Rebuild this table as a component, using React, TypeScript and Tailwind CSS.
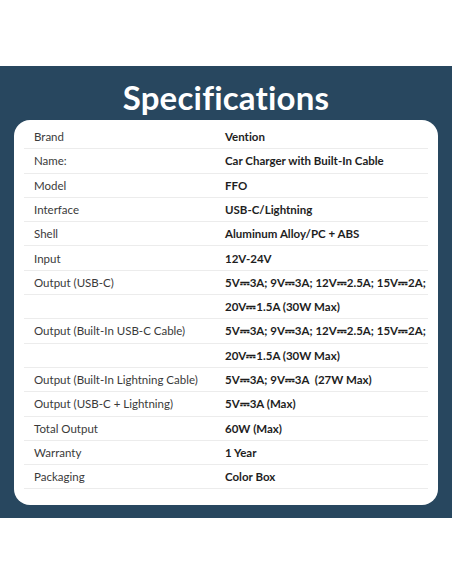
import React from "react";

const rows: [string, string][] = [
  ["Brand", "Vention"],
  ["Name:", "Car Charger with Built-In Cable"],
  ["Model", "FFO"],
  ["Interface", "USB-C/Lightning"],
  ["Shell", "Aluminum Alloy/PC + ABS"],
  ["Input", "12V-24V"],
  ["Output (USB-C)", "5V⎓3A; 9V⎓3A; 12V⎓2.5A; 15V⎓2A;"],
  ["", "20V⎓1.5A (30W Max)"],
  ["Output (Built-In USB-C Cable)", "5V⎓3A; 9V⎓3A; 12V⎓2.5A; 15V⎓2A;"],
  ["", "20V⎓1.5A (30W Max)"],
  ["Output (Built-In Lightning Cable)", "5V⎓3A; 9V⎓3A  (27W Max)"],
  ["Output (USB-C + Lightning)", "5V⎓3A (Max)"],
  ["Total Output", "60W (Max)"],
  ["Warranty", "1 Year"],
  ["Packaging", "Color Box"],
];

export default function App() {
  return (
    <div className="w-[452px] h-[584px] bg-white font-['Lato','DejaVu_Sans',sans-serif] [font-variant-ligatures:none]">
      <div className="h-[66px]" />
      <div className="h-[452px] bg-[#28475f] flex flex-col items-center">
        <h1 className="mt-[9px] h-[45px] text-[33px] leading-[45px] font-bold text-white tracking-[0.2px]">
          Specifications
        </h1>
        <div className="w-[424px] h-[385px] bg-white rounded-[16px] pt-[5px] px-[10px]">
          {rows.map(([k, v], i) => (
            <div
              key={i}
              className="h-[24.3px] flex items-center border-b border-[#ececec] text-[11.5px]"
            >
              <div className="w-[201px] pl-[10px] text-[#3a3a3a]">{k}</div>
              <div className="font-bold text-[#1e1e1e] whitespace-pre">{v}</div>
            </div>
          ))}
        </div>
      </div>
    </div>
  );
}
